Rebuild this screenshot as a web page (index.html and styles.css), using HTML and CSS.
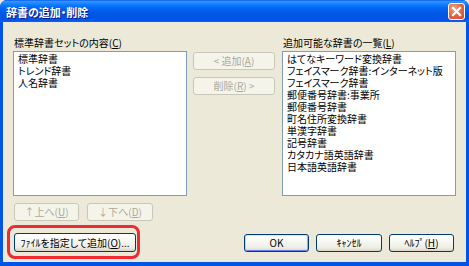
FILE: index.html
```html
<!DOCTYPE html>
<html lang="ja">
<head>
<meta charset="utf-8">
<link rel="stylesheet" href="styles.css">
</head>
<body>
<div class="window">
  <div class="titlebar">
    <span class="title">辞書の追加・削除</span>
    <span class="close"><svg viewBox="0 0 17 17" width="17" height="17"><path d="M5 5 L12 12 M12 5 L5 12" stroke="#fff" stroke-width="2.2" stroke-linecap="square"/></svg></span>
  </div>
  <div class="content">
    <div class="main">
      <div class="label c1">標準辞書セットの内容(<u>C</u>)</div>
      <div class="label c3">追加可能な辞書の一覧(<u>L</u>)</div>
      <ul class="list c1">
        <li>標準辞書</li>
        <li>トレンド辞書</li>
        <li>人名辞書</li>
      </ul>
      <div class="mid">
        <button class="btn disabled wide">&lt; 追加(<u>A</u>)</button>
        <button class="btn disabled wide">削除(<u>R</u>) &gt;</button>
      </div>
      <ul class="list c3">
        <li>はてなキーワード変換辞書</li>
        <li>フェイスマーク辞書:インターネット版</li>
        <li>フェイスマーク辞書</li>
        <li>郵便番号辞書:事業所</li>
        <li>郵便番号辞書</li>
        <li>町名住所変換辞書</li>
        <li>単漢字辞書</li>
        <li>記号辞書</li>
        <li>カタカナ語英語辞書</li>
        <li>日本語英語辞書</li>
      </ul>
    </div>
    <div class="order">
      <button class="btn disabled up">↑上へ(<u>U</u>)</button>
      <button class="btn disabled down">↓下へ(<u>D</u>)</button>
    </div>
    <div class="bottom">
      <div class="filewrap">
        <button class="btn file">ﾌｧｲﾙを指定して追加(<u>O</u>)...</button>
        <span class="highlight"></span>
      </div>
      <div class="actions">
        <button class="btn default ok">OK</button>
        <button class="btn cancel">ｷｬﾝｾﾙ</button>
        <button class="btn help">ﾍﾙﾌﾟ(<u>H</u>)</button>
      </div>
    </div>
  </div>
</div>
</body>
</html>
```
FILE: styles.css
```css
html, body {
  margin: 0;
  padding: 0;
  background: #ECE9D8;
}
body {
  width: 469px;
  height: 266px;
  overflow: hidden;
  font-family: "Noto Sans CJK JP", sans-serif;
  font-size: 10px;
  font-feature-settings: "palt";
  color: #000;
}
.window {
  width: 469px;
  height: 266px;
  box-sizing: border-box;
  display: flex;
  flex-direction: column;
  background: #0055E5;
  border-radius: 7px 7px 0 0;
  overflow: hidden;
}
.titlebar {
  height: 22px;
  flex: none;
  display: flex;
  align-items: center;
  justify-content: space-between;
  padding: 0 4px 0 6px;
  background: linear-gradient(to bottom, #0058EE 0%, #3A93FF 6%, #288EFF 11%, #127DFF 20%, #036FFC 30%, #0262EE 44%, #0057E5 60%, #0054E3 78%, #0055EB 90%, #005BF5 96%, #026AFE 100%);
}
.title {
  color: #fff;
  font-size: 11px;
  font-weight: bold;
  line-height: 14px;
  text-shadow: 1px 1px 0 #0A1883;
  margin-top: 2px;
}
.close {
  width: 17px;
  height: 17px;
  box-sizing: border-box;
  display: flex;
  align-items: center;
  justify-content: center;
  border: 1px solid #fff;
  border-radius: 3px;
  background: radial-gradient(circle at 35% 30%, #F2A58A 0%, #E36B4A 45%, #D54A24 100%);
  margin-top: 1px;
}
.close svg {
  display: block;
  margin: -1px;
}
.content {
  flex: 1;
  margin: 0 3px 4px 3px;
  background: #ECE9D8;
  padding: 15px 10px 10px 10px;
  display: flex;
  flex-direction: column;
  border-bottom: 0;
}
.main {
  display: grid;
  grid-template-columns: 174px 83px 174px;
  grid-template-rows: 14px 145px;
  column-gap: 6px;
}
.c1 { grid-column: 1; }
.c3 { grid-column: 3; }
.label {
  grid-row: 1;
  line-height: 12px;
  padding-left: 1px;
  white-space: nowrap;
}
.list {
  grid-row: 2;
  margin: 0;
  padding: 1px 0 0 4px;
  list-style: none;
  background: #fff;
  border: 1px solid #7F9DB9;
  box-sizing: border-box;
}
.list li {
  line-height: 12px;
  height: 12px;
  white-space: nowrap;
}
.mid {
  grid-row: 2;
  grid-column: 2;
  display: flex;
  flex-direction: column;
  gap: 7px;
  padding-top: 1px;
}
.btn {
  font-family: inherit;
  font-size: 10px;
  font-feature-settings: "palt";
  margin: 0;
  padding: 0;
  height: 18px;
  box-sizing: border-box;
  border: 1px solid #003C74;
  border-radius: 3px;
  background: linear-gradient(to bottom, #FFFFFF 0%, #F7F7F3 40%, #EEEDE5 80%, #D8D2C6 100%);
  color: #000;
  line-height: 14px;
  white-space: nowrap;
  display: flex;
  align-items: center;
  justify-content: center;
}
.btn.disabled {
  border-color: #C9C7BA;
  background: #F5F4EA;
  color: #ACA899;
}
.btn.wide { width: 82px; }
.order {
  display: flex;
  gap: 8px;
  margin: 7px 0 0 1px;
}
.up { width: 65px; }
.down { width: 66px; }
.bottom {
  display: flex;
  justify-content: space-between;
  align-items: flex-end;
  margin: 12px 2px 0 1px;
}
.filewrap {
  position: relative;
}
.file {
  width: 122px;
  height: 19px;
}
.highlight {
  position: absolute;
  left: -7px;
  top: -8px;
  right: -4px;
  bottom: -7px;
  border: 3px solid #EE2A33;
  border-radius: 8px;
  pointer-events: none;
}
.actions {
  display: flex;
  gap: 7px;
}
.ok { width: 65px; }
.cancel { width: 66px; }
.help { width: 65px; }
.btn.default {
  box-shadow: inset 0 1px 0 #CEE7FF, inset 1px 0 0 #BCD4F6, inset -1px 0 0 #89ADE4, inset 0 -1px 0 #6982EE;
}
u {
  text-decoration: underline;
  text-underline-offset: 1px;
}
```
